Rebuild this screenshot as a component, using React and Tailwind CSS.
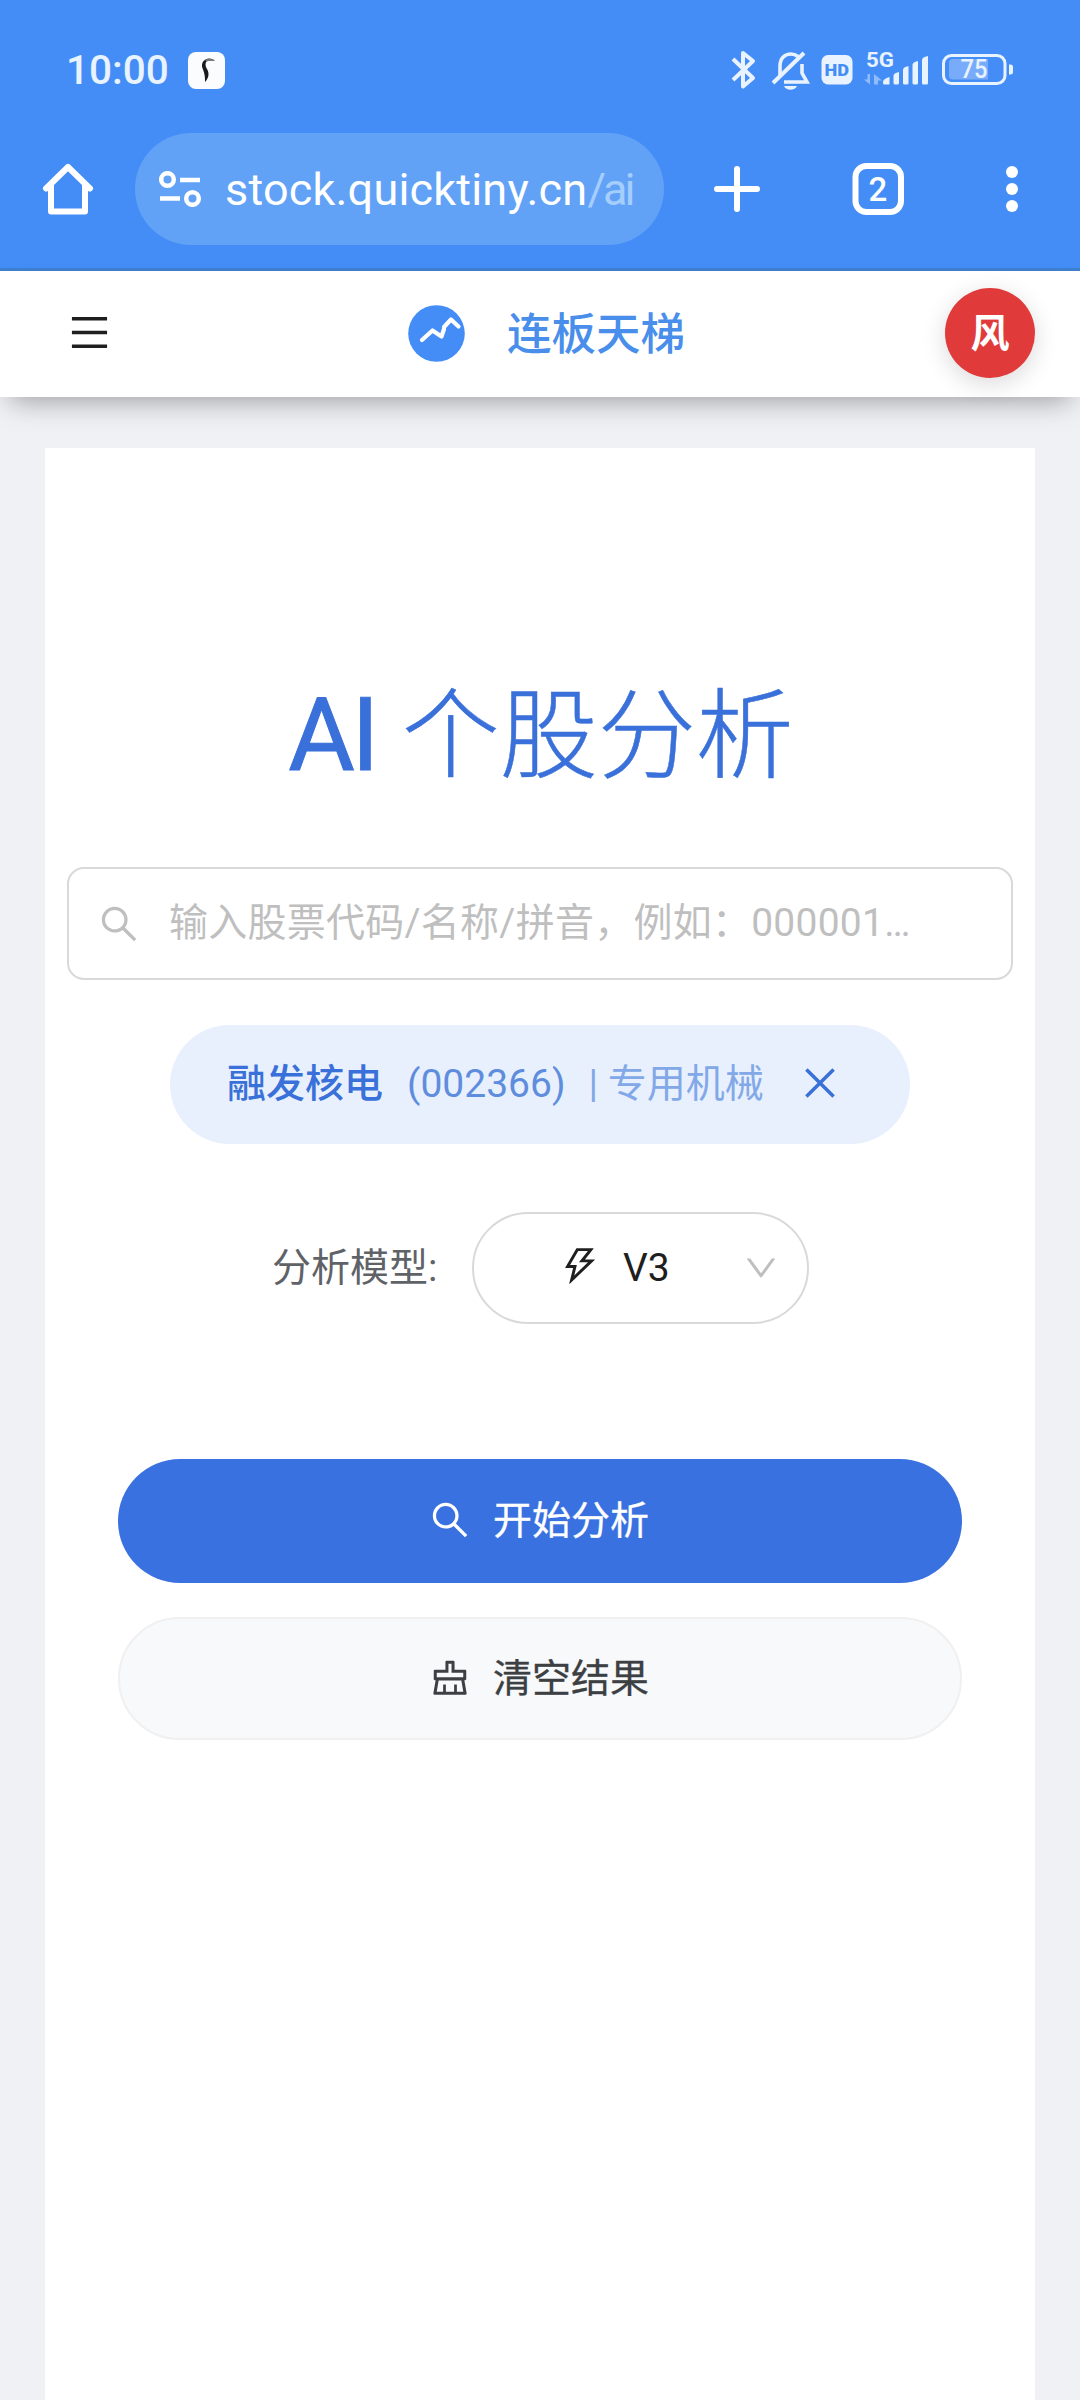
import { useState } from 'react';
import {
  AiOutlineClear,
  AiOutlineClose,
  AiOutlineDown,
  AiOutlineMenu,
  AiOutlineSearch,
  AiOutlineThunderbolt,
} from 'react-icons/ai';

const STOCK = { name: '融发核电', code: '002366', industry: '专用机械' };

function StatusBar() {
  return (
    <div className="flex h-[133px] items-start justify-between pl-[66px] pr-[66px] pt-[42px] text-[#e8f3ff]">
      <div className="mt-[8px] flex h-[40px] items-center">
        <span className="w-[122px] text-[40.500px] font-medium leading-none">10:00</span>
        <svg width="37" height="37" viewBox="0 0 37 37">
          <rect width="37" height="37" rx="8" fill="#fbfcfd" />
          <path d="M27 8.500C22 5 15 6.500 14 12.500C13.400 17 17.500 19 17 30C21 26 21.500 21 19 17C17 13.500 17 10.500 19.500 8.500Z" fill="#1b1b1b" />
          <path d="M17 8C20 5.500 24 6 27 9C23.500 8 21 8.500 19 9.500Z" fill="#777" />
        </svg>
      </div>
      <svg width="284" height="50" viewBox="0 -8 284 50" fill="none" stroke="#e8f3ff">
        {/* Bluetooth */}
        <path d="M3 9 23 28 13 36.500V3L23 11 3 30" strokeWidth="4" strokeLinejoin="round" />
        {/* Muted bell */}
        <path d="M50 27V16C50 8 55 4 61 4c3 0 5 1 7 2.500M72 14v9l5 9H54" strokeWidth="3.600" />
        <path d="M43 33 74 3" strokeWidth="4" />
        <path d="M54 36h13c-2 5-11 5-13 0Z" fill="#e8f3ff" stroke="none" />
        {/* HD */}
        <rect x="91.500" y="5" width="31" height="29.500" rx="6.500" fill="#e8f3ff" stroke="none" />
        <text x="94.500" y="25.500" fontSize="16" fontWeight="900" fill="#448df6" stroke="none" textLength="24.500" lengthAdjust="spacingAndGlyphs">
          HD
        </text>
        {/* Network */}
        <text x="136" y="17" fontSize="21" fontWeight="700" fill="#e8f3ff" stroke="none" textLength="28" lengthAdjust="spacingAndGlyphs">
          5G
        </text>
        <path d="M134 29.500h3.500V24h2.500v10.500ZM144 24l8 6.500h-4V34.500h-4Z" fill="#8fbcfb" stroke="none" />
        <g fill="#e8f3ff" stroke="none">
          <path d="M153 32q0-3 6.500-5v7.500h-5q-1.500 0-1.500-1.500Z" />
          <path d="M163.500 26q0-3 5.500-4v11q0 1.500-1.500 1.500h-2.500q-1.500 0-1.500-1.500Z" />
          <path d="M173 20q0-3 5.500-4v17q0 1.500-1.500 1.500h-2.500q-1.500 0-1.500-1.500Z" />
          <path d="M182.500 15q0-3 5.500-4v22q0 1.500-1.500 1.500h-2.500q-1.500 0-1.500-1.500Z" />
          <path d="M192 10q0-3 6-4v27q0 1.500-1.500 1.500h-3q-1.500 0-1.500-1.500Z" />
        </g>
        {/* Battery */}
        <rect x="213.500" y="5.500" width="61.500" height="28" rx="8" strokeWidth="3" />
        <path d="M223 9h35v20.500h-35q-4 0-4-4V13q0-4 4-4Z" fill="#78acfa" stroke="none" />
        <path d="M279 14.500h1.500q2.500 0 2.500 2.500v5q0 2.500-2.500 2.500H279Z" fill="#e8f3ff" stroke="none" />
        <text x="230.500" y="28" fontSize="25" fontWeight="500" fill="#e8f3ff" stroke="none" textLength="27" lengthAdjust="spacingAndGlyphs">
          75
        </text>
      </svg>
    </div>
  );
}

function BrowserBar() {
  return (
    <div className="flex h-[138px] items-start border-b-3 border-[#3f7fd0] text-white">
      <svg width="135" height="112" viewBox="0 0 135 112" fill="none" stroke="white" strokeWidth="6" strokeLinejoin="round">
        <path d="M46 55.500 68 34 90 55.500" strokeLinecap="round" />
        <path d="M51 51V78.500H85V51" />
      </svg>
      <div className="flex h-[112px] w-[529px] items-center rounded-full bg-[#61a2f7] pl-[24px]">
        <svg width="43" height="36" viewBox="0 0 43 36" fill="none" stroke="white" strokeWidth="4.500">
          <circle cx="8.500" cy="8.500" r="6.300" />
          <circle cx="33.500" cy="27.500" r="6.300" />
          <path d="M21 9h20M1 27.500h20" />
        </svg>
        <span className="ml-[23px] mt-px whitespace-nowrap text-[45px] leading-none tracking-[0.2px]">
          stock.quicktiny.cn<span className="tracking-[-3px] text-[#a6cefc]">/ai</span>
        </span>
      </div>
      <svg width="416" height="112" viewBox="0 0 416 112" fill="none" stroke="white" strokeWidth="6" strokeLinecap="round">
        <path d="M53 56h40M73 36v40" />
        <rect x="191.500" y="33" width="45.500" height="46" rx="11" />
        <text x="214" y="67.500" fontSize="33" fontWeight="500" fill="white" stroke="none" textAnchor="middle">
          2
        </text>
        <g fill="white" stroke="none">
          <circle cx="348" cy="39" r="6" />
          <circle cx="348" cy="56" r="6" />
          <circle cx="348" cy="73" r="6" />
        </g>
      </svg>
    </div>
  );
}

function SiteHeader() {
  return (
    <header className="relative flex h-[126px] items-center justify-between bg-white pb-[2px] pl-[67px] pr-[45px] shadow-[0_14px_26px_-10px_rgba(0,0,0,0.35)]">
      <button className="w-[81px] pb-px text-[#1f1f1f]">
        <AiOutlineMenu size={45} />
      </button>
      <div className="flex items-center gap-[42px]">
        <svg width="57" height="57" viewBox="0 0 57 57">
          <circle cx="28.500" cy="28.500" r="28.300" fill="#448df6" />
          <path d="M14 35 24.500 25.500 33.500 31.500 36 24M36 22 43 14.500 50.500 21.500" fill="none" stroke="white" strokeWidth="4.200" strokeLinecap="round" strokeLinejoin="round" />
        </svg>
        <span className="mt-[4px] text-[44.500px] font-medium leading-none text-[#488eea]">连板天梯</span>
      </div>
      <div className="flex size-[90px] items-center justify-center rounded-full bg-[#e03b3a] pt-[3px] text-[39px] font-bold leading-none text-white shadow-[0_6px_24px_rgba(0,0,0,0.15)]">
        风
      </div>
    </header>
  );
}

export default function App() {
  const [query, setQuery] = useState('');
  const [stock, setStock] = useState(STOCK);

  function clearAll() {
    setQuery('');
    setStock(null);
  }

  return (
    <div className="flex h-[2400px] w-[1080px] flex-col overflow-hidden bg-[#f0f1f5] font-['Roboto','Noto_Sans_CJK_SC',sans-serif]">
      <div className="bg-[#448df6]">
        <StatusBar />
        <BrowserBar />
      </div>
      <SiteHeader />

      <main className="mx-[45px] mt-[51px] flex flex-1 flex-col items-center bg-white px-[23px] pt-[230px]">
        <h1 className="flex h-[118px] items-center whitespace-nowrap pl-[2px] text-[98px] leading-none text-[#3a70d9]">
          <span className="mb-[5px] mr-[26px] text-[102px] tracking-[-3.500px] [-webkit-text-stroke:1px_#3a70d9]">AI</span>
          <span className="font-light [-webkit-text-stroke:0.5px_#3a70d9]">个股分析</span>
        </h1>

        {/* Search */}
        <label className="mt-[71px] flex h-[113px] w-[946px] items-center rounded-[17px] border-2 border-[#d9d9d9] pl-[28px] text-[#bfbfbf]">
          <AiOutlineSearch size={44} />
          <input
            value={query}
            onChange={(e) => setQuery(e.target.value)}
            placeholder="输入股票代码/名称/拼音，例如：000001…"
            className="ml-[28px] w-[780px] text-[39px] tracking-[0.25px] text-gray-800 outline-none placeholder:text-[#bfbfbf]"
          />
        </label>

        {/* Selected stock */}
        {stock && (
          <div className="mt-[45px] flex h-[119px] w-[740px] items-center rounded-full bg-[#e8f0fd] pl-[57px] text-[39px] leading-none text-[#3a70d9]">
            <span className="font-medium">{stock.name}</span>
            <span className="ml-[24px] text-[#5f8dde]">({stock.code})</span>
            <span className="ml-[23px] text-[#82a8e8]">| {stock.industry}</span>
            <button onClick={() => setStock(null)} className="ml-[34px] pb-[3px]">
              <AiOutlineClose size={44} />
            </button>
          </div>
        )}

        {/* Model */}
        <div className="mt-[68px] flex w-full items-center pl-[204px] text-[39px] leading-none">
          <span className="w-[200px] text-[#5f6368]">分析模型:</span>
          <button className="flex h-[112px] w-[337px] items-center rounded-full border-2 border-[#d9d9d9] pl-[84px] text-[#1f1f1f]">
            <AiOutlineThunderbolt size={44} className="mb-[5px]" />
            <span className="ml-[21px] w-[119px] text-left">V3</span>
            <AiOutlineDown size={38} className="text-[#bfbfbf]" />
          </button>
        </div>

        {/* Actions */}
        <div className="mt-[135px] flex w-[844px] flex-col gap-[34px] text-[39px] leading-none">
          <button className="flex h-[124px] items-center justify-center gap-[21px] rounded-full bg-[#3a71e0] pr-[3px] text-white [-webkit-text-stroke:0.3px_white]">
            <AiOutlineSearch size={44} className="mb-[3px]" />
            <span className="mt-px">开始分析</span>
          </button>
          <button
            onClick={clearAll}
            className="flex h-[123px] items-center justify-center gap-[21px] rounded-full border-2 border-[#f0f0f0] bg-[#f8f9fb] pr-[3px] text-[#3c4043] [-webkit-text-stroke:0.3px_#3c4043]"
          >
            <AiOutlineClear size={44} className="mb-[2px]" />
            <span className="mt-px">清空结果</span>
          </button>
        </div>
      </main>
    </div>
  );
}
